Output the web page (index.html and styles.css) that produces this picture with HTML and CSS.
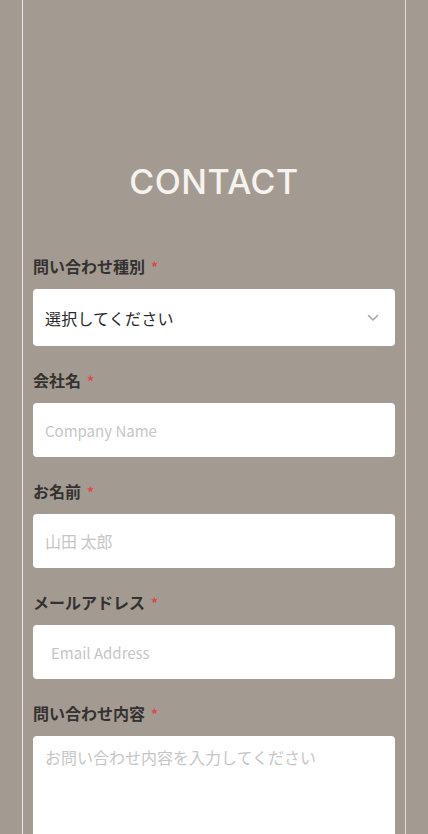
FILE: index.html
```html
<!DOCTYPE html>
<html lang="ja">
<head>
<meta charset="utf-8">
<title>Contact</title>
<link rel="stylesheet" href="styles.css">
</head>
<body>
<div class="frame">
  <section class="contact">
    <h1 class="title">CONTACT</h1>
    <form class="form">
      <div class="field">
        <label class="label">問い合わせ種別<span class="req">*</span></label>
        <div class="select">
          <span class="select-text">選択してください</span>
          <svg class="chev" width="12" height="8" viewBox="0 0 12 8"><path d="M1.5 1.5 L6 6 L10.5 1.5" fill="none" stroke="#a8a8a8" stroke-width="1.6" stroke-linecap="round" stroke-linejoin="round"/></svg>
        </div>
      </div>
      <div class="field">
        <label class="label">会社名<span class="req">*</span></label>
        <div class="input"><span class="ph ph-latin">Company Name</span></div>
      </div>
      <div class="field">
        <label class="label">お名前<span class="req">*</span></label>
        <div class="input"><span class="ph">山田 太郎</span></div>
      </div>
      <div class="field">
        <label class="label">メールアドレス<span class="req">*</span></label>
        <div class="input input-email"><span class="ph ph-latin">Email Address</span></div>
      </div>
      <div class="field">
        <label class="label">問い合わせ内容<span class="req">*</span></label>
        <div class="textarea"><span class="ph">お問い合わせ内容を入力してください</span></div>
      </div>
    </form>
  </section>
</div>
</body>
</html>
```
FILE: styles.css
```css
html, body {
  margin: 0;
  padding: 0;
  background: #a39b92;
}
body {
  font-family: "Noto Sans CJK JP", "Noto Sans", sans-serif;
  overflow: hidden;
  height: 834px;
}
.frame {
  margin-left: 22px;
  width: 384px;
  box-sizing: border-box;
  min-height: 834px;
  border-left: 1px solid rgba(255, 255, 255, 0.8);
  border-right: 1px solid rgba(255, 255, 255, 0.65);
}
.contact {
  padding: 160px 10px 0;
}
.title {
  margin: 0;
  text-align: center;
  font-family: "Inter", "Lato", sans-serif;
  font-weight: 500;
  font-size: 34px;
  line-height: 44px;
  letter-spacing: 0.5px;
  color: #f6f3ef;
}
.form {
  display: flex;
  flex-direction: column;
  gap: 22px;
  margin-top: 50px;
}
.field {
  display: flex;
  flex-direction: column;
  gap: 11px;
}
.label {
  font-size: 16px;
  line-height: 24px;
  height: 24px;
  font-weight: 700;
  color: #333230;
}
.req {
  color: #e0474c;
  font-size: 14px;
  margin-left: 6px;
}
.select, .input, .textarea {
  background: #ffffff;
  border-radius: 4px;
  display: flex;
  align-items: center;
  box-sizing: border-box;
  padding: 0 12px;
}
.select {
  height: 57px;
  justify-content: space-between;
  padding-right: 16px;
}
.select-text {
  font-size: 16px;
  color: #2a2a2a;
  letter-spacing: 0.2px;
}
.chev {
  display: block;
}
.input {
  height: 54px;
}
.input-email {
  padding-left: 18px;
}
.ph {
  font-size: 16px;
  color: #c6c6c6;
}
.ph-latin {
  font-size: 15px;
}
.textarea {
  height: 200px;
  align-items: flex-start;
  padding-top: 9px;
}
```
